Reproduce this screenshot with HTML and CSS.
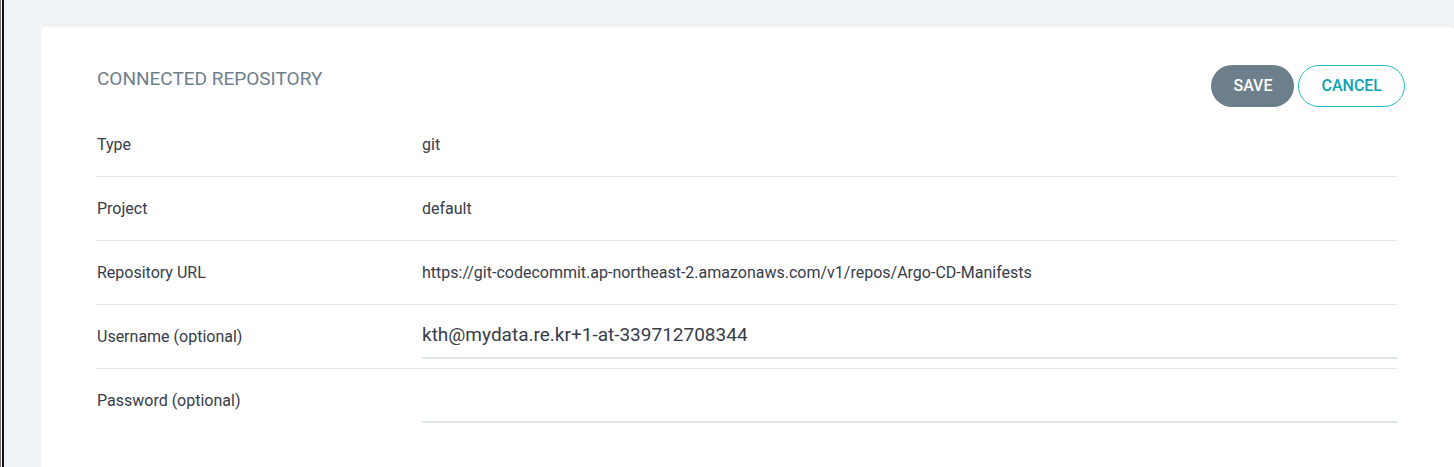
FILE: index.html
```html
<!DOCTYPE html>
<html lang="en">
<head>
<meta charset="utf-8">
<title>Connected repository</title>
<link rel="stylesheet" href="styles.css">
</head>
<body>
<div class="app">
  <div class="rail"></div>
  <main class="page">
    <form class="panel">
      <header class="panel-header">
        <h1 class="title">CONNECTED REPOSITORY</h1>
        <div class="actions">
          <button class="button button-primary" type="button">SAVE</button>
          <button class="button button-outline" type="button">CANCEL</button>
        </div>
      </header>
      <div class="rows">
        <div class="row"><span class="label">Type</span><span class="value">git</span></div>
        <div class="row"><span class="label">Project</span><span class="value">default</span></div>
        <div class="row"><span class="label">Repository URL</span><span class="value">https://git-codecommit.ap-northeast-2.amazonaws.com/v1/repos/Argo-CD-Manifests</span></div>
        <div class="row"><label class="label" for="username">Username (optional)</label><input class="field" id="username" type="text" value="kth@mydata.re.kr+1-at-339712708344"></div>
        <div class="row"><label class="label" for="password">Password (optional)</label><input class="field" id="password" type="password"></div>
      </div>
    </form>
  </main>
</div>
</body>
</html>
```
FILE: styles.css
```css
* { box-sizing: border-box; }
body {
  margin: 0;
  background: #eff3f6;
  color: #363c4a;
  font: 16px/20px Roboto, sans-serif;
}
.app { display: flex; min-height: 100vh; }
.rail {
  flex: none;
  width: 4px;
  background: #fff;
  border-left: 1px solid #777;
  border-right: 2px solid #14110c;
}
.page { display: flex; flex: 1; padding: 27px 0 0 37px; }
.panel {
  flex: 1;
  padding: 38px 49px 32px 56px;
  background: #fff;
  border-radius: 4px 4px 0 0;
}
.panel-header { display: flex; justify-content: space-between; }
.title {
  margin: 2px 0 0;
  color: #6d7f8b;
  font-size: 19px;
  font-weight: 400;
  line-height: 24px;
}
.actions { display: flex; gap: 4px; }
.button {
  height: 42px;
  padding: 0 22px;
  border: 1px solid #1fbdd0;
  border-radius: 21px;
  font: 500 16px/20px Roboto, sans-serif;
}
.button-primary { border: 0; background: #6d7f8b; color: #fff; }
.button-outline { background: #fff; color: #0da2b5; }
.rows { margin: 6px 8px 0 0; }
.row {
  display: grid;
  grid-template-columns: 1fr 3fr;
  align-items: center;
  height: 64px;
  border-bottom: 1px solid #dee6eb;
}
.row:last-child { border-bottom: 0; }
.field {
  width: 100%;
  height: 44px;
  padding: 0 0 2px;
  border: 0;
  border-bottom: 2px solid #dee6eb;
  background: transparent;
  color: #363c4a;
  font: 19px/24px Roboto, sans-serif;
  outline: 0;
}
```
